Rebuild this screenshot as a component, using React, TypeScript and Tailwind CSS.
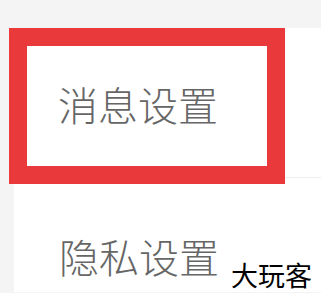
export default function App() {
  return (
    <div
      className="relative w-[321px] h-[293px] overflow-hidden bg-[#f4f4f4]"
      style={{ fontFamily: '"Noto Sans CJK SC", "Noto Sans", sans-serif' }}
    >
      <div className="mt-[28px] ml-[14px] bg-white flex flex-col">
        <div className="h-[150px] flex items-center pl-[44px] border-b border-[#eeeeee]">
          <span className="text-[40px] leading-none text-[#666666] font-light pt-[2px]">消息设置</span>
        </div>
        <div className="h-[114px] flex items-start pl-[45px] pt-[58px]">
          <span className="text-[40px] leading-none text-[#666666] font-light">隐私设置</span>
        </div>
      </div>

      {/* red annotation box */}
      <div className="absolute left-[9px] top-[28px] w-[276px] h-[156px] border-[18px] border-[#ea393b]" />

      {/* watermark */}
      <div className="absolute left-[231px] top-[261px] text-[27px] leading-none text-black">大玩客</div>
    </div>
  );
}
